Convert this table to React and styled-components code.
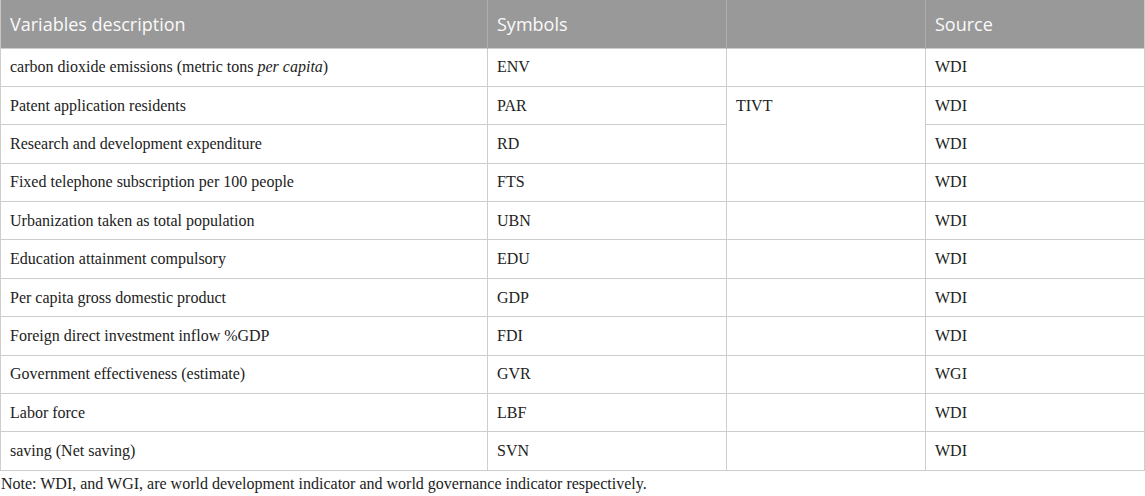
import React from "react";
import styled, { createGlobalStyle } from "styled-components";

const rows = [
  { desc: <>carbon dioxide emissions (metric tons <em>per capita</em>)</>, sym: "ENV", src: "WDI" },
  { desc: "Patent application residents", sym: "PAR", src: "WDI", group: "TIVT", span: 2 },
  { desc: "Research and development expenditure", sym: "RD", src: "WDI", skip: true },
  { desc: "Fixed telephone subscription per 100 people", sym: "FTS", src: "WDI" },
  { desc: "Urbanization taken as total population", sym: "UBN", src: "WDI" },
  { desc: "Education attainment compulsory", sym: "EDU", src: "WDI" },
  { desc: "Per capita gross domestic product", sym: "GDP", src: "WDI" },
  { desc: "Foreign direct investment inflow %GDP", sym: "FDI", src: "WDI" },
  { desc: "Government effectiveness (estimate)", sym: "GVR", src: "WGI" },
  { desc: "Labor force", sym: "LBF", src: "WDI" },
  { desc: "saving (Net saving)", sym: "SVN", src: "WDI" },
];

const App = () => {
  return (
    <Wrapper>
      <GlobalStyle />
      <Table>
        <colgroup>
          <col style={{ width: 487 }} />
          <col style={{ width: 239 }} />
          <col style={{ width: 199 }} />
          <col />
        </colgroup>
        <thead>
          <tr>
            <Th>Variables description</Th>
            <Th>Symbols</Th>
            <Th></Th>
            <Th>Source</Th>
          </tr>
        </thead>
        <tbody>
          {rows.map((row) => (
            <Tr key={row.sym}>
              <Td>{row.desc}</Td>
              <Td>{row.sym}</Td>
              {!row.skip && (
                <Td rowSpan={row.span || 1} $top={!!row.group}>
                  {row.group || ""}
                </Td>
              )}
              <Td>{row.src}</Td>
            </Tr>
          ))}
        </tbody>
      </Table>
      <Note>
        Note: WDI, and WGI, are world development indicator and world governance indicator respectively.
      </Note>
    </Wrapper>
  );
};

const GlobalStyle = createGlobalStyle`
  body {
    margin: 0;
    background: #fff;
  }
`;

const Wrapper = styled.div`
  width: 1145px;
  font-family: "Liberation Serif", "Times New Roman", serif;
  color: #222;
`;

const Table = styled.table`
  width: 1145px;
  border-collapse: collapse;
  table-layout: fixed;
  border-left: 1px solid #c8c8c8;
  border-right: 1px solid #c8c8c8;
  border-bottom: 1px solid #c8c8c8;
`;

const Th = styled.th`
  height: 48px;
  padding: 0 9px;
  background: #999999;
  color: #fafafa;
  font-family: "Open Sans", "Liberation Sans", sans-serif;
  font-weight: 400;
  font-size: 18px;
  text-align: left;
  border-left: 1px solid #adadad;
  box-sizing: border-box;
  &:first-child {
    border-left: none;
  }
`;

const Tr = styled.tr`
  height: 38.4px;
`;

const Td = styled.td`
  padding: ${(p) => (p.$top ? "9px 9px 0" : "0 9px")};
  vertical-align: ${(p) => (p.$top ? "top" : "middle")};
  font-size: 16px;
  line-height: 20px;
  border: 1px solid #cdcdcd;
  white-space: nowrap;
  em {
    font-style: italic;
  }
`;

const Note = styled.div`
  margin-top: 3px;
  font-size: 16px;
  line-height: 20px;
  padding-left: 1px;
  color: #222;
  white-space: nowrap;
`;

export default App;
